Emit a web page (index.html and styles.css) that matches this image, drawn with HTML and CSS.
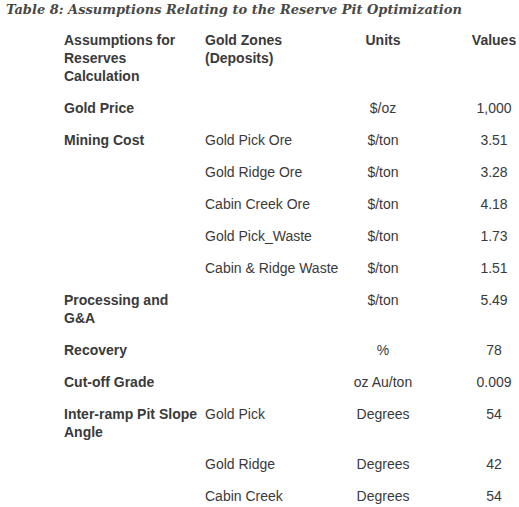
FILE: index.html
```html
<!DOCTYPE html>
<html>
<head>
<meta charset="utf-8">
<link rel="stylesheet" href="styles.css">
</head>
<body>
<h1 class="caption">Table 8: Assumptions Relating to the Reserve Pit Optimization</h1>
<div class="table">
  <div class="cell head">Assumptions for Reserves Calculation</div>
  <div class="cell head">Gold Zones (Deposits)</div>
  <div class="cell head center">Units</div>
  <div class="cell head value">Values</div>

  <div class="cell head">Gold Price</div>
  <div class="cell"></div>
  <div class="cell center">$/oz</div>
  <div class="cell value">1,000</div>

  <div class="cell head">Mining Cost</div>
  <div class="cell">Gold Pick Ore</div>
  <div class="cell center">$/ton</div>
  <div class="cell value">3.51</div>

  <div class="cell"></div>
  <div class="cell">Gold Ridge Ore</div>
  <div class="cell center">$/ton</div>
  <div class="cell value">3.28</div>

  <div class="cell"></div>
  <div class="cell">Cabin Creek Ore</div>
  <div class="cell center">$/ton</div>
  <div class="cell value">4.18</div>

  <div class="cell"></div>
  <div class="cell">Gold Pick_Waste</div>
  <div class="cell center">$/ton</div>
  <div class="cell value">1.73</div>

  <div class="cell"></div>
  <div class="cell">Cabin &amp; Ridge Waste</div>
  <div class="cell center">$/ton</div>
  <div class="cell value">1.51</div>

  <div class="cell head">Processing and G&amp;A</div>
  <div class="cell"></div>
  <div class="cell center">$/ton</div>
  <div class="cell value">5.49</div>

  <div class="cell head">Recovery</div>
  <div class="cell"></div>
  <div class="cell center">%</div>
  <div class="cell value">78</div>

  <div class="cell head">Cut-off Grade</div>
  <div class="cell"></div>
  <div class="cell center">oz Au/ton</div>
  <div class="cell value">0.009</div>

  <div class="cell head">Inter-ramp Pit Slope Angle</div>
  <div class="cell">Gold Pick</div>
  <div class="cell center">Degrees</div>
  <div class="cell value">54</div>

  <div class="cell"></div>
  <div class="cell">Gold Ridge</div>
  <div class="cell center">Degrees</div>
  <div class="cell value">42</div>

  <div class="cell"></div>
  <div class="cell">Cabin Creek</div>
  <div class="cell center">Degrees</div>
  <div class="cell value">54</div>
</div>
</body>
</html>
```
FILE: styles.css
```css
html, body {
  margin: 0;
  padding: 0;
  background: #ffffff;
  overflow: hidden;
}

body {
  font-family: "Liberation Sans", Arial, sans-serif;
  color: #3a3a3a;
}

.caption {
  margin: 0;
  padding: 0 0 0 6px;
  font-family: "DejaVu Serif", Georgia, serif;
  font-style: italic;
  font-weight: bold;
  font-size: 13px;
  line-height: 19px;
  color: #4a4844;
  white-space: nowrap;
}

.table {
  display: grid;
  grid-template-columns: 141px 140px 76px 1fr;
  padding: 5px 0 0 64px;
  font-size: 14px;
  line-height: 18px;
}

.cell {
  padding: 7px 0;
}

.cell:nth-child(4n+1) {
  padding-right: 3px;
}

.head {
  font-weight: bold;
}

.center {
  text-align: center;
}

.value {
  text-align: center;
  padding-left: 48px;
  padding-right: 0;
}
```
